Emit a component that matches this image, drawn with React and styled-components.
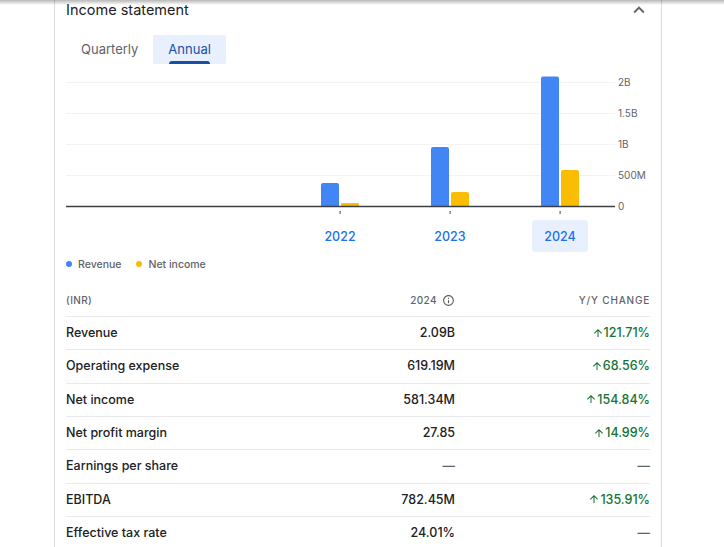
import React from "react";
import styled, { createGlobalStyle } from "styled-components";

const GlobalStyle = createGlobalStyle`
  body {
    margin: 0;
    background: #fff;
    font-family: "Inter", "Roboto", sans-serif;
    color: #202124;
    overflow: hidden;
  }
`;

const TopShadow = styled.div`
  position: fixed;
  top: 0;
  left: 0;
  right: 0;
  height: 5px;
  background: linear-gradient(rgba(0, 0, 0, 0.28), rgba(0, 0, 0, 0));
  pointer-events: none;
`;

const Card = styled.section`
  box-sizing: border-box;
  width: 608px;
  margin-left: 54px;
  padding: 0 11px;
  border-left: 1px solid #dadce0;
  border-right: 1px solid #dadce0;
  min-height: 547px;
`;

const Header = styled.div`
  display: flex;
  align-items: center;
  justify-content: space-between;
  height: 19px;
`;

const Title = styled.h2`
  margin: 0;
  font-size: 14.5px;
  line-height: 19px;
  font-weight: 400;
  color: #202124;
`;

const Tabs = styled.div`
  display: flex;
  margin-top: 16px;
  height: 29px;
`;

const Tab = styled.button`
  border: none;
  border-radius: 2px;
  padding: 0 15px;
  height: 29px;
  font-family: inherit;
  font-size: 13px;
  font-weight: 400;
  background: ${(p) => (p.$active ? "#e8f0fe" : "transparent")};
  color: ${(p) => (p.$active ? "#174ea6" : "#5f6368")};
  cursor: pointer;
  span {
    position: relative;
    display: inline-block;
    line-height: 29px;
  }
  span::after {
    content: "";
    display: ${(p) => (p.$active ? "block" : "none")};
    position: absolute;
    left: 1px;
    right: 1px;
    bottom: 0;
    height: 3px;
    border-radius: 3px 3px 0 0;
    background: #174ea6;
  }
`;

const ChartSvg = styled.svg`
  display: block;
  overflow: visible;
`;

const YearRow = styled.div`
  display: flex;
  margin-left: -1px;
  margin-top: 4px;
`;

const YearSlot = styled.div`
  width: 110px;
  display: flex;
  justify-content: center;
`;

const YearButton = styled.button`
  border: none;
  border-radius: 4px;
  height: 32px;
  padding: 0 12px;
  font-family: inherit;
  font-size: 12.5px;
  font-weight: 500;
  color: #1a73e8;
  background: ${(p) => (p.$active ? "#e8f0fe" : "transparent")};
`;

const Legend = styled.div`
  display: flex;
  gap: 15px;
  margin-top: 4px;
  height: 16px;
  align-items: center;
`;

const LegendItem = styled.div`
  display: flex;
  align-items: center;
  gap: 6px;
  font-size: 10.5px;
  font-weight: 500;
  color: #5f6368;
  &::before {
    content: "";
    width: 6px;
    height: 6px;
    border-radius: 50%;
    background: ${(p) => p.$color};
  }
`;

const Table = styled.div`
  margin-top: 12px;
`;

const Row = styled.div`
  display: grid;
  grid-template-columns: 1fr 120px 195px;
  align-items: center;
  box-sizing: border-box;
  height: ${(p) => (p.$head ? "33px" : "33.33px")};
  border-bottom: 1px solid #e8eaed;
  padding-bottom: ${(p) => (p.$head ? "0" : "1px")};
`;

const HeadCell = styled.div`
  font-size: 10px;
  font-weight: 500;
  color: #5f6368;
  letter-spacing: ${(p) => (p.$spaced ? "0.8px" : "0.4px")};
  display: flex;
  align-items: center;
  justify-content: ${(p) => (p.$left ? "flex-start" : "flex-end")};
  gap: 5px;
`;

const Label = styled.div`
  font-size: 12.5px;
  font-weight: 500;
  color: #202124;
`;

const Value = styled.div`
  font-size: 12.5px;
  font-weight: 500;
  color: ${(p) => (p.$muted ? "#5f6368" : "#202124")};
  text-align: right;
`;

const Change = styled.div`
  display: flex;
  justify-content: flex-end;
  align-items: center;
  font-size: 12.5px;
  font-weight: 500;
  color: ${(p) => (p.$muted ? "#5f6368" : "#137333")};
`;

const ChevronUp = () => (
  <svg width="22" height="22" viewBox="0 0 24 24" fill="#5f6368">
    <path d="M12 8l-6 6 1.41 1.41L12 10.83l4.59 4.58L18 14z" />
  </svg>
);

const InfoIcon = () => (
  <svg width="13" height="13" viewBox="0 0 24 24" fill="#5f6368">
    <path d="M11 7h2v2h-2zm0 4h2v6h-2zm1-9C6.48 2 2 6.48 2 12s4.48 10 10 10 10-4.48 10-10S17.52 2 12 2zm0 18c-4.41 0-8-3.59-8-8s3.59-8 8-8 8 3.59 8 8-3.59 8-8 8z" />
  </svg>
);

const ArrowUp = () => (
  <svg width="12" height="12" viewBox="0 0 24 24" fill="#137333">
    <path d="M4 12l1.41 1.41L11 7.83V20h2V7.83l5.58 5.59L20 12l-8-8-8 8z" />
  </svg>
);

// chart: 62px per 1B, baseline at y=142
const BASE = 142;
const PER_B = 62;
const grid = [
  { y: 18, label: "2B" },
  { y: 49, label: "1.5B" },
  { y: 80, label: "1B" },
  { y: 111, label: "500M" },
];
const years = [
  { year: "2022", rev: 0.37, net: 0.048 },
  { year: "2023", rev: 0.95, net: 0.226 },
  { year: "2024", rev: 2.09, net: 0.58134 },
];

const Bar = ({ x, h, color }) => {
  const r = Math.min(2, h / 2);
  const y = BASE - h;
  return (
    <path
      d={`M${x} ${BASE} V${y + r} Q${x} ${y} ${x + r} ${y} H${x + 18 - r} Q${x + 18} ${y} ${x + 18} ${y + r} V${BASE} Z`}
      fill={color}
    />
  );
};

const Chart = () => (
  <ChartSvg width="584" height="152" viewBox="0 0 584 152">
    {grid.map((g) => (
      <g key={g.label}>
        <line x1="0" x2="549" y1={g.y + 0.5} y2={g.y + 0.5} stroke="#f1f3f4" />
        <text x="552" y={g.y + 4} fontSize="10" fill="#5f6368" fontFamily="Inter, sans-serif">
          {g.label}
        </text>
      </g>
    ))}
    {years.map((d, i) => {
      const c = 274 + i * 110;
      return (
        <g key={d.year}>
          <Bar x={c - 19} h={d.rev * PER_B} color="#4285f4" />
          <Bar x={c + 1} h={d.net * PER_B} color="#fbbc04" />
          <rect x={c - 0.5} y="147" width="1.2" height="3" fill="#5f6368" />
        </g>
      );
    })}
    <line x1="0" x2="549" y1={BASE + 0.5} y2={BASE + 0.5} stroke="#3c4043" strokeWidth="1.3" />
    <text x="552" y={BASE + 4} fontSize="10" fill="#5f6368" fontFamily="Inter, sans-serif">
      0
    </text>
  </ChartSvg>
);

const rows = [
  { label: "Revenue", value: "2.09B", change: "121.71%" },
  { label: "Operating expense", value: "619.19M", change: "68.56%" },
  { label: "Net income", value: "581.34M", change: "154.84%" },
  { label: "Net profit margin", value: "27.85", change: "14.99%" },
  { label: "Earnings per share", value: null, change: null },
  { label: "EBITDA", value: "782.45M", change: "135.91%" },
  { label: "Effective tax rate", value: "24.01%", change: null },
];

const App = () => {
  return (
    <>
      <GlobalStyle />
      <TopShadow />
      <Card>
        <Header>
          <Title>Income statement</Title>
          <ChevronUp />
        </Header>
        <Tabs>
          <Tab>
            <span>Quarterly</span>
          </Tab>
          <Tab $active>
            <span>Annual</span>
          </Tab>
        </Tabs>
        <Chart />
        <YearRow>
          <YearSlot />
          <YearSlot />
          {years.map((d) => (
            <YearSlot key={d.year}>
              <YearButton $active={d.year === "2024"}>{d.year}</YearButton>
            </YearSlot>
          ))}
        </YearRow>
        <Legend>
          <LegendItem $color="#4285f4">Revenue</LegendItem>
          <LegendItem $color="#fbbc04">Net income</LegendItem>
        </Legend>
        <Table>
          <Row $head>
            <HeadCell $left>(INR)</HeadCell>
            <HeadCell>
              2024 <InfoIcon />
            </HeadCell>
            <HeadCell $spaced>Y/Y CHANGE</HeadCell>
          </Row>
          {rows.map((r) => (
            <Row key={r.label}>
              <Label>{r.label}</Label>
              <Value $muted={!r.value}>{r.value || "—"}</Value>
              <Change $muted={!r.change}>
                {r.change ? (
                  <>
                    <ArrowUp />
                    {r.change}
                  </>
                ) : (
                  "—"
                )}
              </Change>
            </Row>
          ))}
        </Table>
      </Card>
    </>
  );
};

export default App;
